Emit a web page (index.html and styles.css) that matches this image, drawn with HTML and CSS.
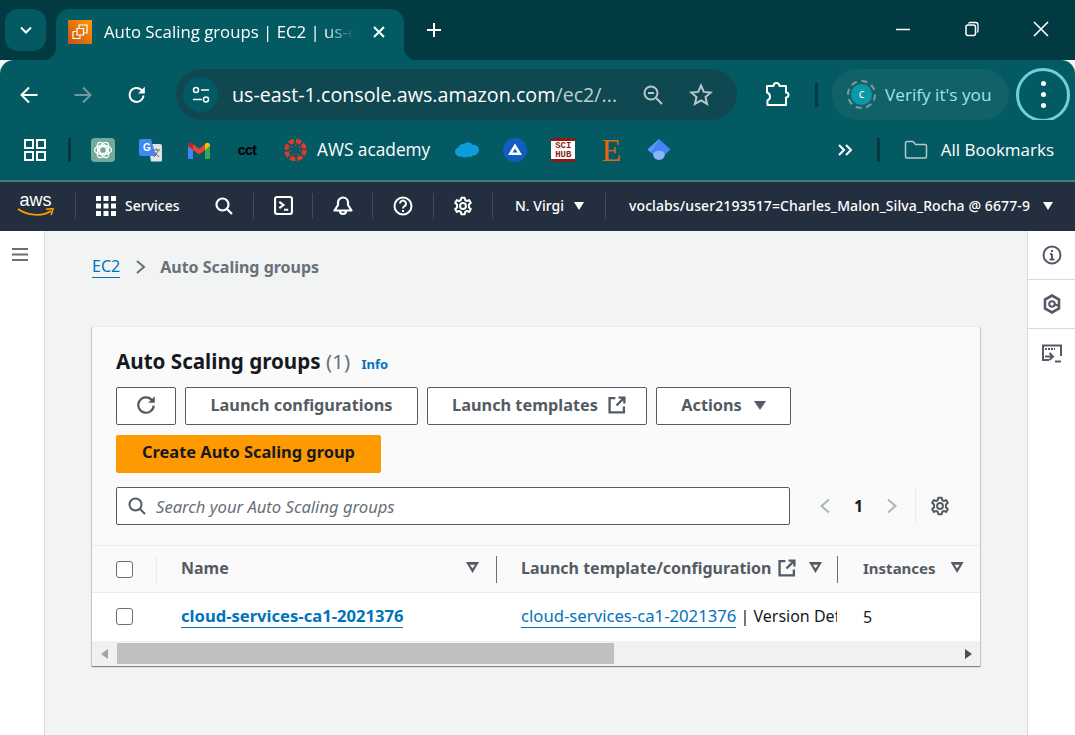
FILE: index.html
```html
<!DOCTYPE html>
<html lang="en">
<head>
    <meta charset="UTF-8" />
    <meta name="viewport" content="width=device-width, initial-scale=1.0" />
    <title>Auto Scaling groups | EC2</title>
    <link rel="stylesheet" href="styles.css">
</head>
<body>

    <!-- browser chrome -->
    <div class="tabstrip">
        <div class="tab-search">
            <svg width="14" height="14" viewBox="0 0 14 14"><path d="M2 4.500l5 5 5-5" fill="none" stroke="#fff" stroke-width="2"/></svg>
        </div>
        <div class="tab">
            <svg class="favicon" width="24" height="24" viewBox="0 0 24 24">
                <defs><linearGradient id="ec2" x1="0" y1="1" x2="1" y2="0"><stop offset="0" stop-color="#c8511b"/><stop offset="1" stop-color="#ff9900"/></linearGradient></defs>
                <rect width="24" height="24" fill="url(#ec2)"/>
                <path d="M5 11.500h3M5 11.500v7h7v-3M9 8.500h6.500v6.500H9zM11 8.500V5h8v8h-3.500" fill="none" stroke="#fff" stroke-width="1.200"/>
            </svg>
            <span class="tab-title">Auto Scaling groups | EC2 | us-east-1</span>
            <svg class="tab-close" width="14" height="14" viewBox="0 0 14 14"><path d="M2 2l10 10M12 2L2 12" stroke="#fff" stroke-width="2"/></svg>
        </div>
        <svg class="new-tab" width="16" height="16" viewBox="0 0 16 16"><path d="M8 1v14M1 8h14" stroke="#fff" stroke-width="2"/></svg>
        <div class="window-controls">
            <svg width="16" height="16" viewBox="0 0 16 16"><path d="M1 8.500h14" stroke="#fff" stroke-width="1.500"/></svg>
            <svg width="16" height="16" viewBox="0 0 16 16"><path d="M4.500 2.500A2 2 0 0 1 6 1.500h5.500a2.500 2.500 0 0 1 2.500 2.500v6a2 2 0 0 1-1 1.500" fill="none" stroke="#fff" stroke-width="1.300"/><rect x="2" y="4" width="9.500" height="10.500" rx="2" fill="none" stroke="#fff" stroke-width="1.500"/></svg>
            <svg width="16" height="16" viewBox="0 0 16 16"><path d="M1 1l14 14M15 1L1 15" stroke="#fff" stroke-width="1.600"/></svg>
        </div>
    </div>

    <div class="toolbar">
        <svg class="nav-icon" width="20" height="20" viewBox="0 0 20 20"><path d="M18.500 10H2.500M10 2.500L2.500 10l7.500 7.500" fill="none" stroke="#fff" stroke-width="2"/></svg>
        <svg class="nav-icon" width="20" height="20" viewBox="0 0 20 20"><path d="M1.500 10h16M10 2.500l7.500 7.500-7.500 7.500" fill="none" stroke="#6d9ca0" stroke-width="2"/></svg>
        <svg class="nav-icon" width="20" height="20" viewBox="0 0 20 20"><path d="M16.500 10.500a7 7 0 1 1-2-5.500l2.200 2.200" fill="none" stroke="#fff" stroke-width="2"/><path d="M17.800 1.800v6.800H11z" fill="#fff"/></svg>

        <div class="omnibox">
            <div class="site-info">
                <svg width="18" height="18" viewBox="0 0 18 18"><g fill="none" stroke="#fff" stroke-width="1.500"><circle cx="4" cy="4" r="2.500"/><circle cx="14" cy="13.500" r="2.500"/><path d="M9 4h8M1 13.500h9"/></g></svg>
            </div>
            <span class="url"><b>us-east-1.console.aws.amazon.com</b>/ec2/...</span>
            <svg class="zoom-icon" width="22" height="22" viewBox="0 0 22 22"><g fill="none" stroke="#b9c7c9" stroke-width="2"><circle cx="9" cy="9" r="6.500"/><path d="M14 14l6 6M6 9h6"/></g></svg>
            <svg width="24" height="24" viewBox="0 0 24 24"><path d="M12 2.500l2.800 6.400 6.900.6-5.200 4.600 1.600 6.800L12 17.300l-6.100 3.600 1.600-6.800-5.200-4.600 6.900-.6z" fill="none" stroke="#b9c7c9" stroke-width="2"/></svg>
        </div>

        <svg class="ext-icon" width="26" height="26" viewBox="0 0 26 26"><path d="M3 4h6.500a3 3 0 0 1 6 0H22v6.500a2.500 2.500 0 0 1 0 5V23H3.500v-4.500a4 4 0 0 0 2.500-3.700A4.500 4.500 0 0 0 3 10.500z" fill="none" stroke="#fff" stroke-width="2" stroke-linejoin="round"/></svg>
        <span class="divider tool-divider"></span>

        <div class="verify">
            <span class="avatar-ring"><span class="avatar">c</span></span>
            <span>Verify it's you</span>
        </div>
        <div class="menu-btn"><i></i><i></i><i></i></div>
    </div>

    <div class="bookmarks">
        <svg class="apps" width="22" height="22" viewBox="0 0 22 22"><g fill="none" stroke="#fff" stroke-width="2"><rect x="1" y="1" width="8" height="8"/><rect x="13" y="1" width="8" height="8"/><rect x="1" y="13" width="8" height="8"/><rect x="13" y="13" width="8" height="8"/></g></svg>
        <span class="divider apps-divider"></span>

        <div class="bm">
            <svg width="24" height="24" viewBox="0 0 24 24"><rect width="24" height="24" rx="4" fill="#74aa9c"/><g fill="none" stroke="#fff" stroke-width="1.300"><circle cx="12" cy="12" r="3.500"/><ellipse cx="12" cy="12" rx="8.500" ry="4.500"/><ellipse cx="12" cy="12" rx="8.500" ry="4.500" transform="rotate(60 12 12)"/><ellipse cx="12" cy="12" rx="8.500" ry="4.500" transform="rotate(120 12 12)"/></g></svg>
        </div>
        <div class="bm">
            <svg width="24" height="24" viewBox="0 0 24 24"><path d="M9 6h12a2 2 0 0 1 2 2v14a1.500 1.500 0 0 1-1.500 1.500H12z" fill="#dfe3e6"/><path d="M2 1h10l5 17H2a2 2 0 0 1-2-2V3a2 2 0 0 1 2-2z" fill="#4285f4"/><text x="4" y="13" class="g-letter">G</text><path d="M14 12h7M17.500 10.500v1.500M15 19l4.500-6.500M15.500 14l4.500 5" stroke="#666" stroke-width="1" fill="none"/></svg>
        </div>
        <div class="bm">
            <svg width="22" height="17" viewBox="0 0 22 17"><path d="M0 3v12.500A1.500 1.500 0 0 0 1.500 17H5V7z" fill="#4285f4"/><path d="M22 3v12.500a1.500 1.500 0 0 1-1.500 1.500H17V7z" fill="#34a853"/><path d="M5 8V2.200L11 6.800l6-4.600V8l-6 4.600z" fill="#ea4335"/><path d="M0 3.200C0 .8 3 0 4.500 1.500L5 2v6L0 4z" fill="#c5221f"/><path d="M22 3.200C22 .8 19 0 17.500 1.500L17 2v6l5-4z" fill="#fbbc04"/></svg>
        </div>
        <div class="bm"><span class="cct">cct</span></div>
        <div class="bm bm-label">
            <svg width="23" height="24" viewBox="0 0 24 24"><circle cx="12" cy="12" r="9.500" fill="none" stroke="#e13a2b" stroke-width="4.500" stroke-dasharray="5.500 2"/><circle cx="12" cy="12" r="5" fill="none" stroke="#e13a2b" stroke-width="1.500" stroke-dasharray="1.500 3"/></svg>
            <span>AWS academy</span>
        </div>
        <div class="bm">
            <svg width="24" height="16" viewBox="0 0 24 16"><path d="M6 14.500C2.500 15 0 12.500 0 9.800 0 7.500 1.500 6 3.500 5.500 4 3 6.500 1.500 9 2c1-1 2.500-1.700 4-1.700 2 0 3.500 1 4.200 2.500 4-.6 6.800 2 6.800 5.300 0 3.400-3 6-6.500 5.300-1 1.400-3.200 2-4.800 1.200-1.600 1.400-4.800 1.200-6.700-.1z" fill="#0d9dda"/></svg>
        </div>
        <div class="bm">
            <svg width="24" height="24" viewBox="0 0 24 24"><circle cx="12" cy="12" r="12" fill="#0f5fc2"/><path d="M12 5.500l7 11.500H5z" fill="#fff"/><path d="M12 10.500L14.500 14.500h-5z" fill="#0f5fc2"/></svg>
        </div>
        <div class="bm">
            <div class="scihub"><span>SCI</span><span>HUB</span></div>
        </div>
        <div class="bm"><span class="etsy">E</span></div>
        <div class="bm">
            <svg width="24" height="24" viewBox="0 0 24 24"><circle cx="12" cy="16" r="6" fill="#8ab4f8"/><path d="M12 1l11.500 10.500-5 4.500a8 8 0 0 0-13 0l-5-4.500z" fill="#4285f4"/><path d="M12 1L.5 11.500l3.500 3z" fill="#5e97f6"/></svg>
        </div>

        <div class="bm-right">
            <svg width="16" height="14" viewBox="0 0 16 14"><path d="M2 2l5 5-5 5M9 2l5 5-5 5" fill="none" stroke="#fff" stroke-width="2"/></svg>
            <span class="divider more-divider"></span>
            <svg width="24" height="20" viewBox="0 0 24 20"><path d="M1.500 3a1.500 1.500 0 0 1 1.500-1.500h6l2.500 3H21a1.500 1.500 0 0 1 1.500 1.500v10.500A1.500 1.500 0 0 1 21 18H3a1.500 1.500 0 0 1-1.500-1.500z" fill="none" stroke="#b9c7c9" stroke-width="1.500"/></svg>
            <span class="all-bm">All Bookmarks</span>
        </div>
    </div>

    <!-- aws console nav -->
    <nav class="awsnav">
        <div class="nav-cell logo-cell">
            <div class="aws-logo">
                <span>aws</span>
                <svg width="37" height="9" viewBox="0 0 37 9"><path d="M1 1c9 6.500 24 8 33 2" fill="none" stroke="#f90" stroke-width="1.800"/><path d="M29 1.200l7-.5-1.800 6.300" fill="none" stroke="#f90" stroke-width="1.600"/></svg>
            </div>
        </div>
        <div class="nav-cell services-cell">
            <svg width="20" height="20" viewBox="0 0 20 20" fill="#fff"><rect x="0" y="0" width="5" height="5"/><rect x="7.500" y="0" width="5" height="5"/><rect x="15" y="0" width="5" height="5"/><rect x="0" y="7.500" width="5" height="5"/><rect x="7.500" y="7.500" width="5" height="5"/><rect x="15" y="7.500" width="5" height="5"/><rect x="0" y="15" width="5" height="5"/><rect x="7.500" y="15" width="5" height="5"/><rect x="15" y="15" width="5" height="5"/></svg>
            <span>Services</span>
            <svg class="search-icon" width="18" height="18" viewBox="0 0 18 18"><g fill="none" stroke="#fff" stroke-width="2.200"><circle cx="7.500" cy="7.500" r="6"/><path d="M12 12l5 5"/></g></svg>
        </div>
        <div class="nav-cell icon-cell cell-terminal">
            <svg width="19" height="19" viewBox="0 0 18 18"><rect x="1" y="1" width="16" height="16" rx="2" fill="none" stroke="#fff" stroke-width="2"/><path d="M5 5.500L9 8.500l-4 3M9.500 13h4" fill="none" stroke="#fff" stroke-width="2"/></svg>
        </div>
        <div class="nav-cell icon-cell cell-bell">
            <svg width="20" height="20" viewBox="0 0 20 20"><path d="M10 1.500a5 5 0 0 0-5 5V9l-3.500 5.500h17L15 9V6.500a5 5 0 0 0-5-5zM7 15a3 3 0 0 0 6 0" fill="none" stroke="#fff" stroke-width="2.200" stroke-linejoin="round"/></svg>
        </div>
        <div class="nav-cell icon-cell cell-help">
            <svg width="20" height="20" viewBox="0 0 20 20"><circle cx="10" cy="10" r="8.500" fill="none" stroke="#fff" stroke-width="2"/><path d="M7 7.500a3 3 0 1 1 4.500 2.700c-1 .6-1.500 1-1.500 2.300" fill="none" stroke="#fff" stroke-width="2"/><rect x="9" y="14" width="2" height="2" fill="#fff"/></svg>
        </div>
        <div class="nav-cell icon-cell cell-gear">
            <svg width="20" height="20" viewBox="0 0 24 24"><use href="#gear"/></svg>
        </div>
        <div class="nav-cell region-cell"><span>N. Virgi</span><i class="caret caret-white"></i></div>
        <div class="nav-cell user-cell"><span>voclabs/user2193517=Charles_Malon_Silva_Rocha @ 6677-9</span><i class="caret caret-white"></i></div>
    </nav>

    <div class="console">
        <aside class="sidenav">
            <svg width="18" height="15" viewBox="0 0 18 15"><path d="M1 2h16M1 7.500h16M1 13h16" stroke="#687078" stroke-width="2"/></svg>
        </aside>

        <main class="content">
            <div class="breadcrumb">
                <a class="crumb-link">EC2</a>
                <svg width="12" height="14" viewBox="0 0 12 14"><path d="M2 1l7 6-7 6" fill="none" stroke="#687078" stroke-width="2"/></svg>
                <span>Auto Scaling groups</span>
            </div>

            <section class="card">
                <div class="card-head">
                    <h2>Auto Scaling groups <span class="count">(1)</span> <a class="info">Info</a></h2>
                    <div class="actions">
                        <button class="btn btn-refresh">
                            <svg width="22" height="22" viewBox="0 0 20 20"><path d="M17 10.500a7 7 0 1 1-2.200-5.600l2 2" fill="none" stroke="#545b64" stroke-width="2"/><path d="M18 2v6h-6z" fill="#545b64"/></svg>
                        </button>
                        <button class="btn btn-config">Launch configurations</button>
                        <button class="btn btn-templates">Launch templates
                            <svg width="18" height="18" viewBox="0 0 17 17"><use href="#external"/></svg>
                        </button>
                        <button class="btn btn-actions">Actions <i class="caret"></i></button>
                    </div>
                    <button class="btn-primary">Create Auto Scaling group</button>
                    <div class="filter-row">
                        <div class="search-box">
                            <svg width="18" height="18" viewBox="0 0 18 18"><g fill="none" stroke="#545b64" stroke-width="2"><circle cx="7.500" cy="7.500" r="6"/><path d="M12 12l5 5"/></g></svg>
                            <span>Search your Auto Scaling groups</span>
                        </div>
                        <div class="pager">
                            <svg width="12" height="16" viewBox="0 0 12 16"><path d="M10 1.500L2.500 8l7.500 6.500" fill="none" stroke="#aab7b8" stroke-width="2"/></svg>
                            <span>1</span>
                            <svg width="12" height="16" viewBox="0 0 12 16"><path d="M2 1.500L9.500 8 2 14.500" fill="none" stroke="#aab7b8" stroke-width="2"/></svg>
                        </div>
                        <div class="prefs">
                            <svg width="20" height="20" viewBox="0 0 24 24"><use href="#gear-dark"/></svg>
                        </div>
                    </div>
                </div>

                <div class="table">
                    <div class="row head-row">
                        <div class="cell check-cell"><i class="checkbox"></i></div>
                        <div class="cell name-cell"><span>Name</span><i class="sort"></i></div>
                        <div class="cell lt-cell"><span>Launch template/configuration</span>
                            <svg width="18" height="18" viewBox="0 0 17 17"><use href="#external"/></svg>
                            <i class="sort"></i></div>
                        <div class="cell inst-cell"><span>Instances</span><i class="sort"></i></div>
                    </div>
                    <div class="row body-row">
                        <div class="cell check-cell"><i class="checkbox"></i></div>
                        <div class="cell name-cell"><a class="link-bold">cloud-services-ca1-2021376</a></div>
                        <div class="cell lt-cell"><div class="clip"><a class="link">cloud-services-ca1-2021376</a> | Version Default</div></div>
                        <div class="cell inst-cell">5</div>
                    </div>
                </div>

                <div class="scrollbar">
                    <i class="arrow-left"></i>
                    <div class="thumb"></div>
                    <i class="arrow-right"></i>
                </div>
            </section>
        </main>

        <aside class="rail">
            <div class="rail-item">
                <svg width="20" height="20" viewBox="0 0 20 20"><circle cx="10" cy="10" r="8.500" fill="none" stroke="#545b64" stroke-width="2"/><path d="M10 9v6M7.500 14.500h5M8 9h2" stroke="#545b64" stroke-width="2" fill="none"/><rect x="9" y="5" width="2" height="2" fill="#545b64"/></svg>
            </div>
            <div class="rail-item">
                <svg width="20" height="20" viewBox="0 0 20 20"><path d="M10 1.500l7 4v9l-7 4-7-4v-9z" fill="none" stroke="#545b64" stroke-width="2.600"/><circle cx="10" cy="10" r="2.800" fill="none" stroke="#545b64" stroke-width="2"/><path d="M12 10l5 2" stroke="#545b64" stroke-width="2.400"/></svg>
            </div>
            <div class="rail-item">
                <svg width="20" height="20" viewBox="0 0 20 20"><path d="M7 16H1V1.500h18V12" fill="none" stroke="#545b64" stroke-width="2"/><path d="M3 5h10" stroke="#545b64" stroke-width="2" stroke-dasharray="2 1"/><path d="M3 12.500h7M7.500 9l3.500 3.500L7.500 16M13 17.500h6" fill="none" stroke="#545b64" stroke-width="2"/></svg>
            </div>
        </aside>
    </div>

    <!-- shared icons -->
    <svg class="defs" width="0" height="0">
        <defs>
            <g id="gear"><path d="M10 2h4l.6 3 2 1 2.800-1.100 2 3.400L19.100 10.300v3.400l2.300 2-2 3.400-2.800-1.100-2 1-.6 3h-4l-.6-3-2-1-2.800 1.100-2-3.400 2.300-2v-3.400L2.600 8.300l2-3.400L7.400 6l2-1z" fill="none" stroke="#fff" stroke-width="2.400" stroke-linejoin="round"/><circle cx="12" cy="12" r="3.500" fill="none" stroke="#fff" stroke-width="2.400"/></g>
            <g id="gear-dark"><path d="M10 2h4l.6 3 2 1 2.800-1.100 2 3.400L19.100 10.300v3.400l2.300 2-2 3.400-2.800-1.100-2 1-.6 3h-4l-.6-3-2-1-2.800 1.100-2-3.400 2.300-2v-3.400L2.600 8.300l2-3.400L7.400 6l2-1z" fill="none" stroke="#545b64" stroke-width="2.400" stroke-linejoin="round"/><circle cx="12" cy="12" r="3.500" fill="none" stroke="#545b64" stroke-width="2.400"/></g>
            <g id="external"><path d="M7 2H1.500v13.500H15V10M10 1.500h5.500V7M15 2L8 9" fill="none" stroke="#545b64" stroke-width="2.200"/></g>
        </defs>
    </svg>
</body>
</html>
```

FILE: styles.css
```css
* {
    box-sizing: border-box;
}

html, body {
    height: 100%;
}

body {
    margin: 0;
    width: 1075px;
    height: 735px;
    overflow: hidden;
    background: #f2f3f3;
    font-family: "Noto Sans", Arial, sans-serif;
    display: flex;
    flex-direction: column;
}

svg {
    display: block;
    flex: none;
}

.defs {
    position: absolute;
}

/* browser chrome */
.tabstrip {
    height: 60px;
    flex: none;
    background: #023a41;
    display: flex;
    align-items: flex-start;
    position: relative;
}

.tab-search {
    width: 41px;
    height: 42px;
    margin: 9px 0 0 5px;
    border-radius: 13px;
    background: #045a62;
    display: flex;
    align-items: center;
    justify-content: center;
}

.tab {
    width: 348px;
    height: 51px;
    margin: 9px 0 0 10px;
    padding: 11px 0 0 12px;
    background: #045a62;
    border-radius: 14px 14px 0 0;
    display: flex;
    align-items: flex-start;
    position: relative;
}

.tab::before,
.tab::after {
    content: "";
    position: absolute;
    bottom: 0;
    width: 13px;
    height: 13px;
}

.tab::before {
    left: -13px;
    background: radial-gradient(circle at 0 0, transparent 13px, #045a62 13.500px);
}

.tab::after {
    right: -13px;
    background: radial-gradient(circle at 100% 0, transparent 13px, #045a62 13.500px);
}

.tab-close {
    margin-top: 5px;
}

.tab-title {
    width: 250px;
    margin: 0 18px 0 12px;
    color: #fff;
    font-family: "Open Sans", sans-serif;
    font-size: 16.800px;
    line-height: 24px;
    white-space: nowrap;
    overflow: hidden;
    -webkit-mask-image: linear-gradient(to right, #000 88%, transparent 100%);
    mask-image: linear-gradient(to right, #000 88%, transparent 100%);
}

.new-tab {
    margin: 22px 0 0 22px;
}

.window-controls {
    margin-left: auto;
    display: flex;
    gap: 53px;
    padding: 21px 26px 0 0;
}

.toolbar {
    height: 60px;
    flex: none;
    background: #045a62;
    border-radius: 14px 14px 0 0;
    display: flex;
    align-items: center;
    padding: 9px 5px 0 19px;
}

.nav-icon {
    margin-right: 34px;
}

.nav-icon:nth-child(3) {
    margin-right: 29px;
}

.omnibox {
    width: 561px;
    height: 51px;
    border-radius: 26px;
    background: #0f4850;
    display: flex;
    align-items: center;
    padding: 0 24px 0 7px;
}

.site-info {
    width: 35px;
    height: 35px;
    flex: none;
    border-radius: 50%;
    background: #045a62;
    display: flex;
    align-items: center;
    justify-content: center;
}

.url {
    flex: 1;
    margin-left: 14px;
    color: #b9cfd1;
    font-family: "Open Sans", sans-serif;
    font-size: 19.700px;
    white-space: nowrap;
}

.url b {
    color: #fff;
    font-weight: 400;
}

.zoom-icon {
    margin-right: 25px;
}

.ext-icon {
    margin-left: 27px;
}

.divider {
    display: block;
    width: 3px;
    height: 24px;
    background: #023a41;
    flex: none;
}

.tool-divider {
    margin-left: 25px;
}

.verify {
    width: 177px;
    height: 51px;
    margin-left: 14px;
    border-radius: 26px;
    background: #106168;
    display: flex;
    align-items: center;
    padding-left: 15px;
    gap: 9px;
    color: #a5e0ea;
    font-family: "Open Sans", sans-serif;
    font-size: 17.200px;
}

.avatar-ring {
    width: 29px;
    height: 29px;
    border-radius: 50%;
    border: 2px dashed #7f9a9e;
    display: flex;
    align-items: center;
    justify-content: center;
}

.avatar {
    width: 21px;
    height: 21px;
    border-radius: 50%;
    background: #0d98a8;
    color: #fff;
    font-size: 12px;
    line-height: 19px;
    text-align: center;
}

.menu-btn {
    width: 54px;
    height: 54px;
    margin-left: 7px;
    border-radius: 50%;
    border: 3px solid #6dd0e0;
    display: flex;
    flex-direction: column;
    align-items: center;
    justify-content: center;
    gap: 6px;
}

.menu-btn i {
    width: 5px;
    height: 5px;
    border-radius: 50%;
    background: #fff;
}

.bookmarks {
    height: 60px;
    flex: none;
    background: #045a62;
    display: flex;
    align-items: center;
    padding-left: 24px;
}

.apps-divider {
    margin: 0 8px 0 22px;
}

.bm {
    width: 48px;
    height: 36px;
    display: flex;
    align-items: center;
    justify-content: center;
    flex: none;
}

.bm-label {
    width: auto;
    padding: 0 13px;
    justify-content: flex-start;
    gap: 10px;
    color: #fff;
    font-family: "Open Sans", sans-serif;
    font-size: 17.300px;
}

.bm-label span,
.all-bm {
    margin-bottom: 2px;
}

.g-letter {
    font-family: "Liberation Sans", sans-serif;
    font-size: 10px;
    font-weight: 700;
    fill: #fff;
}

.cct {
    font-family: "Liberation Sans", sans-serif;
    font-size: 14px;
    font-weight: 700;
    color: #000;
    letter-spacing: -0.500px;
}

.scihub {
    width: 24px;
    height: 24px;
    background: #fff;
    border-top: 3px solid #8c1c13;
    border-bottom: 3px solid #8c1c13;
    color: #8c1c13;
    font-family: "Liberation Mono", monospace;
    font-size: 9px;
    font-weight: 700;
    line-height: 8px;
    text-align: center;
    display: flex;
    flex-direction: column;
    justify-content: center;
    gap: 1px;
}

.scihub span {
    display: block;
}

.etsy {
    color: #e8650a;
    font-family: "Liberation Serif", serif;
    font-size: 32px;
    line-height: 30px;
}

.bm-right {
    margin-left: auto;
    display: flex;
    align-items: center;
    padding-right: 21px;
}

.more-divider {
    margin: 0 24px 0 24px;
}

.all-bm {
    margin-left: 13px;
    color: #fff;
    font-family: "Open Sans", sans-serif;
    font-size: 17px;
}

/* aws nav */
.awsnav {
    height: 51px;
    flex: none;
    background: #232f3e;
    border-top: 2px solid #3e7f86;
    padding-bottom: 2px;
    display: flex;
    align-items: center;
    color: #fff;
    font-size: 14px;
    font-weight: 500;
}

.nav-cell {
    height: 26px;
    display: flex;
    align-items: center;
    border-right: 1px solid #414d5c;
    flex: none;
}

.logo-cell {
    width: 76px;
    justify-content: center;
}

.aws-logo {
    width: 37px;
    margin-left: -4px;
    text-align: center;
}

.aws-logo span {
    display: block;
    font-family: "Liberation Sans", sans-serif;
    font-size: 18px;
    line-height: 13px;
    margin-bottom: 1px;
}

.services-cell {
    width: 178px;
    padding-left: 20px;
    gap: 9px;
}

.search-icon {
    margin-left: 26px;
}

.icon-cell {
    justify-content: center;
}

.cell-terminal {
    width: 59px;
}

.cell-bell {
    width: 60px;
}

.cell-help {
    width: 61px;
}

.cell-gear {
    width: 59px;
}

.region-cell {
    width: 113px;
    padding-left: 22px;
    gap: 10px;
}

.user-cell {
    border-right: none;
    padding-left: 23px;
    gap: 13px;
    letter-spacing: 0.100px;
}

.caret {
    display: block;
    width: 0;
    height: 0;
    border-left: 6px solid transparent;
    border-right: 6px solid transparent;
    border-top: 9px solid #545b64;
    flex: none;
}

.caret-white {
    border-left-width: 5px;
    border-right-width: 5px;
    border-top: 8px solid #fff;
}

/* console body */
.console {
    flex: 1;
    display: flex;
    min-height: 0;
}

.sidenav {
    width: 45px;
    flex: none;
    background: #fff;
    border-right: 1px solid #d5dbdb;
    padding: 16px 0 0 11px;
}

.content {
    flex: 1;
    padding: 25px 47px 0 47px;
    min-width: 0;
}

.breadcrumb {
    display: flex;
    align-items: center;
    gap: 13px;
    height: 22px;
    color: #687078;
    font-size: 16px;
    font-weight: 700;
}

.crumb-link {
    color: #0073bb;
    font-weight: 400;
    border-bottom: 1px solid #0073bb;
    line-height: 21px;
}

.breadcrumb svg {
    margin-left: 2px;
}

.card {
    margin-top: 48px;
    width: 888px;
    background: #fafafa;
    box-shadow: 0 1px 1px 0 rgba(0, 28, 36, 0.3), 1px 1px 1px 0 rgba(0, 28, 36, 0.15), -1px 1px 1px 0 rgba(0, 28, 36, 0.15);
    border-top: 1px solid #eaeded;
}

.card-head {
    padding: 20px 0 21px 24px;
}

.card-head h2 {
    margin: 0;
    color: #16191f;
    font-size: 20.600px;
    font-weight: 700;
    line-height: 28px;
}

.count {
    color: #687078;
    font-weight: 400;
}

.info {
    margin-left: 6px;
    color: #0073bb;
    font-size: 13px;
    font-weight: 700;
}

.actions {
    display: flex;
    gap: 9px;
    margin-top: 9px;
}

.btn {
    height: 38px;
    padding: 0 0 2px;
    background: #fff;
    border: 1px solid #545b64;
    border-radius: 2px;
    color: #545b64;
    font-family: inherit;
    font-size: 16.300px;
    font-weight: 700;
    display: flex;
    align-items: center;
    justify-content: center;
    gap: 10px;
}

.btn-refresh {
    width: 60px;
}

.btn-config {
    width: 233px;
}

.btn-templates {
    width: 220px;
    padding-left: 4px;
}

.btn-actions {
    width: 135px;
    gap: 12px;
}

.btn-primary {
    display: block;
    width: 265px;
    height: 38px;
    margin-top: 10px;
    padding: 0 0 5px;
    background: #ff9900;
    border: none;
    border-radius: 2px;
    color: #16191f;
    font-family: inherit;
    font-size: 16.400px;
    font-weight: 700;
}

.filter-row {
    display: flex;
    align-items: center;
    margin-top: 14px;
}

.search-box {
    width: 674px;
    height: 38px;
    background: #fff;
    border: 1px solid #545b64;
    border-radius: 2px;
    display: flex;
    align-items: center;
    gap: 10px;
    padding-left: 11px;
    color: #687078;
    font-size: 16.600px;
    font-style: italic;
}

.pager {
    width: 126px;
    display: flex;
    align-items: center;
    justify-content: space-between;
    padding: 0 17px 0 29px;
    height: 38px;
    border-right: 1px solid #eaeded;
    color: #16191f;
    font-size: 16px;
    font-weight: 700;
}

.prefs {
    padding-left: 14px;
}

.table {
    background: #fff;
}

.row {
    display: grid;
    grid-template-columns: 65px 340px 341px 142px;
    height: 48px;
    align-items: center;
}

.head-row {
    margin-top: -1px;
    background: #fafafa;
    border-top: 1px solid #eaeded;
    border-bottom: 1px solid #eaeded;
    color: #545b64;
    font-size: 16px;
    font-weight: 700;
}

.body-row {
    color: #16191f;
    font-size: 16px;
}

.body-row .cell {
    padding-bottom: 1px;
}

.cell {
    display: flex;
    align-items: center;
    height: 27px;
    min-width: 0;
}

.check-cell {
    padding-left: 24px;
}

.head-row .check-cell {
    border-right: 1px solid #eaeded;
}

.name-cell {
    padding: 0 17px 3px 24px;
}

.head-row .name-cell,
.head-row .lt-cell {
    border-right: 1px solid #687078;
}

.head-row .name-cell .sort {
    margin-left: auto;
}

.lt-cell {
    padding: 0 0 3px 24px;
}

.head-row .lt-cell {
    padding-right: 15px;
}

.head-row .lt-cell svg {
    margin-left: 6px;
}

.head-row .lt-cell .sort {
    margin-left: auto;
}

.inst-cell {
    padding: 0 0 3px 25px;
}

.head-row .inst-cell {
    font-size: 15px;
}

.head-row .inst-cell .sort {
    margin-left: 15px;
}

.clip {
    white-space: nowrap;
    overflow: hidden;
    width: 316px;
    height: 25px;
    line-height: 23px;
}

.checkbox {
    display: block;
    width: 17px;
    height: 17px;
    background: #fff;
    border: 1px solid #687078;
    border-radius: 3px;
}

.sort {
    display: block;
    width: 13px;
    height: 11px;
    flex: none;
    background: #545b64;
    clip-path: polygon(0 0, 100% 0, 50% 100%, 0 0, 30% 24%, 50% 58%, 70% 24%, 30% 24%);
}

.link-bold {
    color: #0073bb;
    font-size: 16.600px;
    font-weight: 700;
    border-bottom: 1px solid #0073bb;
    white-space: nowrap;
    line-height: 22px;
}

.link {
    color: #0073bb;
    font-size: 16.700px;
    border-bottom: 1px solid #0073bb;
}

.scrollbar {
    height: 25px;
    background: #f1f1f1;
    display: flex;
    align-items: center;
    padding-right: 8px;
    padding-left: 9px;
}

.thumb {
    width: 497px;
    height: 21px;
    margin-left: 9px;
    background: #c0c0c0;
}

.arrow-left,
.arrow-right {
    display: block;
    width: 0;
    height: 0;
    border-top: 5px solid transparent;
    border-bottom: 5px solid transparent;
    flex: none;
}

.arrow-left {
    border-right: 7px solid #a3a3a3;
}

.arrow-right {
    margin-left: auto;
    border-left: 7px solid #505050;
}

.rail {
    width: 48px;
    flex: none;
    background: #fff;
    border-left: 1px solid #d5dbdb;
}

.rail-item {
    height: 49px;
    display: flex;
    align-items: center;
    justify-content: center;
    border-bottom: 1px solid #d5dbdb;
}

.rail-item:last-child {
    border-bottom: none;
}
```
